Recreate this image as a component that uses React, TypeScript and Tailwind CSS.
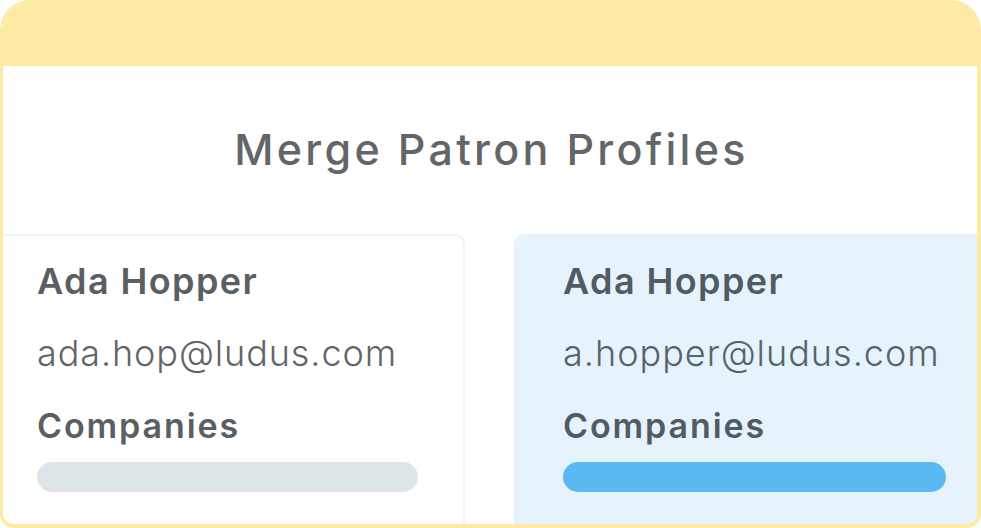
export default function App() {
  return (
    <div className="w-[981px] h-[528px] bg-white">
      <div className="w-full h-full rounded-t-[30px] rounded-b-[14px] border-l-[3px] border-r-[4px] border-b-[4px] border-t-0 border-[#fdeba5] overflow-hidden bg-white flex flex-col" style={{ fontFamily: 'Inter, "Noto Sans", sans-serif' }}>
        <div className="h-[66px] shrink-0 bg-[#fdeba5]" />
        <div className="pt-[62px] h-[168px] shrink-0 text-center">
          <h1 className="text-[43px] leading-[43px] font-medium text-[#636668] tracking-[3.3px] pl-[3px]">Merge Patron Profiles</h1>
        </div>
        <div className="flex flex-1 gap-[49px]">
          <div className="w-[462px] rounded-tr-[10px] border-t-2 border-r-2 border-[#f1f3f5] pl-[34px] pt-[27px] pr-[20px]">
            <div className="text-[36px] leading-[36px] font-semibold text-[#595f62] tracking-[1.4px]">Ada Hopper</div>
            <div className="mt-[36px] text-[36px] leading-[36px] font-light text-[#626567] tracking-[0.9px]">ada.hop@ludus.com</div>
            <div className="mt-[38px] text-[34px] leading-[34px] font-semibold text-[#595f62] tracking-[1.9px]">Companies</div>
            <div className="mt-[19px] h-[30px] w-[381px] rounded-full bg-[#dde5e8]" />
          </div>
          <div className="flex-1 rounded-tl-[10px] bg-[#e6f3fd] pl-[49px] pt-[29px]">
            <div className="text-[36px] leading-[36px] font-semibold text-[#505b63] tracking-[1.4px]">Ada Hopper</div>
            <div className="mt-[36px] text-[36px] leading-[36px] font-light text-[#56636b] tracking-[1px]">a.hopper@ludus.com</div>
            <div className="mt-[38px] text-[34px] leading-[34px] font-semibold text-[#505b63] tracking-[1.9px]">Companies</div>
            <div className="mt-[19px] h-[30px] w-[383px] rounded-full bg-[#5bb9f1]" />
          </div>
        </div>
      </div>
    </div>
  );
}
